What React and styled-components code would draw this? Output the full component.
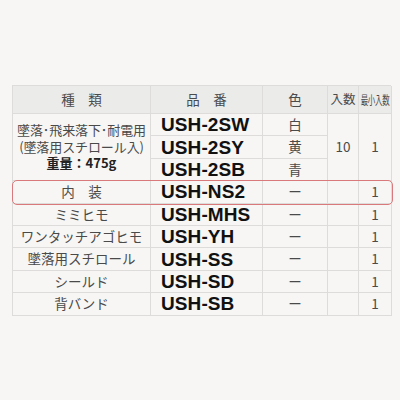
import styled, { createGlobalStyle } from "styled-components";

const GlobalStyle = createGlobalStyle`
  body {
    margin: 0;
    background: #f7f6f4;
    font-family: "Noto Sans CJK JP", "Noto Sans", sans-serif;
  }
`;

const Page = styled.div`
  width: 400px;
  height: 400px;
  padding: 85px 0 0 12px;
  box-sizing: border-box;
`;

const Grid = styled.div`
  display: grid;
  grid-template-columns: 138px 112px 65px 31px 33px;
  grid-template-rows: 28px;
  grid-auto-rows: 22.4px;
  width: 379px;
  border-top: 1px solid #dddcda;
  border-left: 1px solid #dddcda;
  box-sizing: border-box;
`;

const Cell = styled.div`
  display: flex;
  align-items: center;
  justify-content: ${(p) => (p.$left ? "flex-start" : "center")};
  padding-left: ${(p) => (p.$left ? "10px" : "0")};
  grid-row: ${(p) => (p.$span ? `span ${p.$span}` : "auto")};
  border-right: 1px solid #dddcda;
  border-bottom: 1px solid #dddcda;
  background: ${(p) => (p.$head ? "#ebebea" : "transparent")};
  color: #4a4a4a;
  font-size: ${(p) => (p.$small ? "12.5px" : "13.5px")};
  line-height: 1;
  white-space: nowrap;
  box-sizing: border-box;
  overflow: hidden;
`;

const Model = styled(Cell)`
  font-family: "Liberation Sans", Arial, sans-serif;
  font-weight: 700;
  font-size: 19px;
  color: #111;
  letter-spacing: 0.1px;
`;

const Stack = styled.div`
  display: flex;
  flex-direction: column;
  align-items: center;
  line-height: 16.5px;
  font-size: 13px;
  letter-spacing: -0.1px;
`;

const Weight = styled.span`
  font-weight: 700;
  color: #222;
  letter-spacing: 0;
`;

const Tiny = styled.span`
  display: inline-block;
  font-size: 12px;
  transform: scaleX(0.62);
  letter-spacing: -0.5px;
`;

const Highlight = styled.div`
  grid-column: 1 / -1;
  display: grid;
  grid-template-columns: subgrid;
  outline: 1.5px solid #d9797c;
  outline-offset: -0.5px;
  border-radius: 4px;
  position: relative;
  z-index: 1;
`;

const rows = [
  ["ミミヒモ", "USH-MHS"],
  ["ワンタッチアゴヒモ", "USH-YH"],
  ["墜落用スチロール", "USH-SS"],
  ["シールド", "USH-SD"],
  ["背バンド", "USH-SB"],
];

export default function App() {
  return (
    <Page>
      <GlobalStyle />
      <Grid>
        <Cell $head>種　類</Cell>
        <Cell $head>品　番</Cell>
        <Cell $head>色</Cell>
        <Cell $head $small>入数</Cell>
        <Cell $head>
          <Tiny>最小入数</Tiny>
        </Cell>

        <Cell $span={3}>
          <Stack>
            <span>墜落･飛来落下･耐電用</span>
            <span>(墜落用スチロール入)</span>
            <Weight>重量：475g</Weight>
          </Stack>
        </Cell>
        <Model $left>USH-2SW</Model>
        <Cell>白</Cell>
        <Cell $span={3}>10</Cell>
        <Cell $span={3}>1</Cell>
        <Model $left>USH-2SY</Model>
        <Cell>黄</Cell>
        <Model $left>USH-2SB</Model>
        <Cell>青</Cell>

        <Highlight>
          <Cell>内　装</Cell>
          <Model $left>USH-NS2</Model>
          <Cell>ー</Cell>
          <Cell />
          <Cell>1</Cell>
        </Highlight>

        {rows.map(([name, model]) => (
          <Row key={model} name={name} model={model} />
        ))}
      </Grid>
    </Page>
  );
}

function Row({ name, model }) {
  return (
    <>
      <Cell>{name}</Cell>
      <Model $left>{model}</Model>
      <Cell>ー</Cell>
      <Cell />
      <Cell>1</Cell>
    </>
  );
}
